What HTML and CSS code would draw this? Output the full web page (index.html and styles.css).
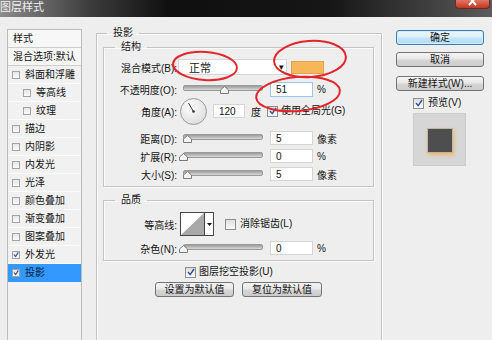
FILE: index.html
```html
<!DOCTYPE html>
<html lang="zh-CN">
<head>
  <meta charset="UTF-8">
  <meta name="viewport" content="width=device-width, initial-scale=1.0">
  <title>图层样式</title>
  <link rel="stylesheet" href="styles.css">
</head>
<body>
  <div class="window">
    <div class="titlebar">
      <span class="title">图层样式</span>
      <span class="close">
        <svg width="10" height="8" viewBox="0 0 10 8"><path d="M1 -3 L8 5 M8 -3 L1 5" stroke="#fff" stroke-width="2"/></svg>
      </span>
    </div>

    <div class="dialog">
      <ul class="styles-list">
        <li class="head">样式</li>
        <li class="head">混合选项:默认</li>
        <li><span class="cb"></span>斜面和浮雕</li>
        <li class="sub"><span class="cb"></span>等高线</li>
        <li class="sub"><span class="cb"></span>纹理</li>
        <li><span class="cb"></span>描边</li>
        <li><span class="cb"></span>内阴影</li>
        <li><span class="cb"></span>内发光</li>
        <li><span class="cb"></span>光泽</li>
        <li><span class="cb"></span>颜色叠加</li>
        <li><span class="cb"></span>渐变叠加</li>
        <li><span class="cb"></span>图案叠加</li>
        <li><span class="cb on"><svg width="7" height="7" viewBox="0 0 7 7"><path d="M1 3.5 L3 5.8 L6.2 1" fill="none" stroke="#2b4f9e" stroke-width="1.3"/></svg></span>外发光</li>
        <li class="active"><span class="cb on"><svg width="7" height="7" viewBox="0 0 7 7"><path d="M1 3.5 L3 5.8 L6.2 1" fill="none" stroke="#2b4f9e" stroke-width="1.3"/></svg></span>投影</li>
      </ul>

      <fieldset class="group outer">
        <legend>投影</legend>

        <fieldset class="group inner">
          <legend>结构</legend>
          <div class="row">
            <span class="lbl">混合模式(B):</span>
            <div class="select">正常<span class="arrow">▾</span></div>
            <span class="swatch"></span>
          </div>
          <div class="row gap6">
            <span class="lbl">不透明度(O):</span>
            <div class="slider"><span class="thumb" style="left: 37px"><svg width="9" height="8" viewBox="0 0 9 8"><path d="M0.5 7.5 V4 L4.5 0.5 L8.5 4 V7.5 Z" fill="#f3f3f3" stroke="#7b7b7b"/></svg></span></div>
            <input class="num focus" value="51">
            <span class="unit">%</span>
          </div>
          <div class="row angle">
            <span class="lbl">角度(A):</span>
            <svg class="dial" width="27" height="27" viewBox="0 0 27 27">
              <defs>
                <radialGradient id="dialg" cx="0.4" cy="0.35" r="0.7">
                  <stop offset="0" stop-color="#ffffff"/>
                  <stop offset="1" stop-color="#dcdcdc"/>
                </radialGradient>
              </defs>
              <circle cx="13.5" cy="13.5" r="13" fill="url(#dialg)" stroke="#9a9a9a"/>
              <path d="M13.5 13.5 L8.5 5" stroke="#333" stroke-width="1"/>
              <circle cx="13.5" cy="13.5" r="1.3" fill="#333"/>
            </svg>
            <input class="num short" value="120">
            <span class="unit deg">度</span>
            <span class="check"><span class="cb big on"><svg width="8" height="8" viewBox="0 0 8 8"><path d="M1 4 L3.2 6.6 L7 1" fill="none" stroke="#2b4f9e" stroke-width="1.4"/></svg></span>使用全局光(G)</span>
          </div>
          <div class="row gap5">
            <span class="lbl">距离(D):</span>
            <div class="slider"><span class="thumb" style="left: 0px"><svg width="9" height="8" viewBox="0 0 9 8"><path d="M0.5 7.5 V4 L4.5 0.5 L8.5 4 V7.5 Z" fill="#f3f3f3" stroke="#7b7b7b"/></svg></span></div>
            <input class="num" value="5">
            <span class="unit">像素</span>
          </div>
          <div class="row gap2">
            <span class="lbl">扩展(R):</span>
            <div class="slider"><span class="thumb" style="left: -4px"><svg width="9" height="8" viewBox="0 0 9 8"><path d="M0.5 7.5 V4 L4.5 0.5 L8.5 4 V7.5 Z" fill="#f3f3f3" stroke="#7b7b7b"/></svg></span></div>
            <input class="num" value="0">
            <span class="unit">%</span>
          </div>
          <div class="row gap2">
            <span class="lbl">大小(S):</span>
            <div class="slider"><span class="thumb" style="left: 0px"><svg width="9" height="8" viewBox="0 0 9 8"><path d="M0.5 7.5 V4 L4.5 0.5 L8.5 4 V7.5 Z" fill="#f3f3f3" stroke="#7b7b7b"/></svg></span></div>
            <input class="num" value="5">
            <span class="unit">像素</span>
          </div>
        </fieldset>

        <fieldset class="group inner quality">
          <legend>品质</legend>
          <div class="row contour-row">
            <span class="lbl">等高线:</span>
            <svg class="contour" width="34" height="24" viewBox="0 0 34 24">
              <rect x="0.5" y="0.5" width="33" height="23" fill="#fff" stroke="#444"/>
              <path d="M1 23 L24 1 L24 23 Z" fill="#a9a9a9"/>
              <path d="M24.5 0.5 V23.5" stroke="#444"/>
              <path d="M27 11 h5 l-2.5 3 z" fill="#111"/>
            </svg>
            <span class="check aa"><span class="cb big"></span>消除锯齿(L)</span>
          </div>
          <div class="row gap4">
            <span class="lbl">杂色(N):</span>
            <div class="slider"><span class="thumb" style="left: -4px"><svg width="9" height="8" viewBox="0 0 9 8"><path d="M0.5 7.5 V4 L4.5 0.5 L8.5 4 V7.5 Z" fill="#f3f3f3" stroke="#7b7b7b"/></svg></span></div>
            <input class="num" value="0">
            <span class="unit">%</span>
          </div>
        </fieldset>

        <div class="knockout">
          <span class="check"><span class="cb big on"><svg width="8" height="8" viewBox="0 0 8 8"><path d="M1 4 L3.2 6.6 L7 1" fill="none" stroke="#2b4f9e" stroke-width="1.4"/></svg></span>图层挖空投影(U)</span>
        </div>
        <div class="defaults">
          <button class="btn">设置为默认值</button>
          <button class="btn">复位为默认值</button>
        </div>
      </fieldset>

      <div class="actions">
        <button class="btn primary">确定</button>
        <button class="btn cancel">取消</button>
        <button class="btn newstyle">新建样式(W)...</button>
        <span class="check preview-cb"><span class="cb big on"><svg width="8" height="8" viewBox="0 0 8 8"><path d="M1 4 L3.2 6.6 L7 1" fill="none" stroke="#2b4f9e" stroke-width="1.4"/></svg></span>预览(V)</span>
        <div class="preview"><span class="preview-square"></span></div>
      </div>
    </div>

    <!-- hand-drawn red circles over the screenshot -->
    <svg class="marks" width="492" height="340" viewBox="0 0 492 340">
      <ellipse cx="205" cy="66" rx="32" ry="14" transform="rotate(4 205 66)" fill="none" stroke="#e3262a" stroke-width="2"/>
      <ellipse cx="310" cy="59" rx="36" ry="18" transform="rotate(-4 310 59)" fill="none" stroke="#e3262a" stroke-width="2"/>
      <ellipse cx="298" cy="94" rx="42" ry="17" transform="rotate(-5 298 94)" fill="none" stroke="#e3262a" stroke-width="2"/>
    </svg>
  </div>
</body>
</html>
```

FILE: styles.css
```css
* { box-sizing: border-box; }
body { margin: 0; width: 492px; height: 340px; overflow: hidden; background: #eeeeee; font-family: "Liberation Sans", "Noto Sans CJK SC", sans-serif; font-size: 10px; color: #141414; }
.window { position: relative; width: 492px; height: 340px; overflow: hidden; }

.titlebar { height: 17px; display: flex; justify-content: space-between; align-items: flex-start; background: linear-gradient(90deg, #8c8c8c 0, #3c3c3c 90px, #0f0f0f 170px, #161616 330px, #444 440px, #5c5c5c 100%); }
.title { margin-left: 0; line-height: 15px; font-size: 11px; color: #f0f0f0; }
.close { width: 35px; height: 9px; margin-right: 2px; display: flex; justify-content: center; background: linear-gradient(#e27562, #c03823); border: 1px solid #6e2a20; border-top: 0; border-radius: 0 0 4px 4px; }

.dialog { display: flex; align-items: flex-start; padding: 9px 0 0 7px; }

.styles-list { list-style: none; margin: 3px 14px 0 0; padding: 0; width: 75px; height: 330px; flex: none; background: #f1f1f1; border: 1px solid #bcbcbc; }
.styles-list li { height: 18px; display: flex; align-items: center; padding-left: 4px; border-bottom: 1px solid #fbfbfb; white-space: nowrap; line-height: 14px; }
.styles-list li.head { padding-left: 5px; background: #f7f7f7; border-bottom: 1px solid #cdcdcd; }
.styles-list li.sub { padding-left: 15px; }
.styles-list li.active { background: #3399ff; border-bottom-color: #3399ff; color: #0d1b3a; }

.cb { width: 8px; height: 8px; margin-right: 5px; flex: none; display: inline-flex; align-items: center; justify-content: center; background: linear-gradient(#e6e6e6, #fbfbfb); border: 1px solid #a4a4a4; }
.cb.big { width: 11px; height: 11px; margin-right: 3px; border-color: #8e8f8f; background: linear-gradient(#dedede, #fbfbfb); }
.check { display: inline-flex; align-items: center; white-space: nowrap; line-height: 12px; }

.group { margin: 0; min-width: 0; border: 1px solid #c4c4c4; box-shadow: inset 1px 1px 0 #fafafa, 1px 1px 0 #fafafa; }
.group legend { padding: 0 6px; line-height: 14px; }
.outer { width: 286px; height: 340px; flex: none; margin-right: 14px; padding: 0 7px 0 6px; }
.outer > legend { margin-left: 4px; }
.inner { width: 271px; padding: 5px 0 4px 0; }
.inner > legend { margin-left: 11px; }
.quality { margin-top: 6px; }

.row { display: flex; align-items: center; height: 16px; white-space: nowrap; }
.gap2 { margin-top: 2px; }
.gap4 { margin-top: 4px; }
.gap5 { margin-top: 5px; }
.gap6 { margin-top: 6px; }
.lbl { width: 73px; flex: none; text-align: right; }

.select { width: 109px; height: 16px; margin-left: 1px; padding-left: 10px; display: flex; align-items: center; justify-content: space-between; background: #fff; border: 1px solid #d6d6d6; font-size: 11px; }
.select .arrow { width: 9px; font-size: 9px; color: #111; text-align: center; }
.swatch { width: 33px; height: 13px; margin-left: 4px; background: #f7b65a; border: 1px solid #e4a24a; }

.slider { position: relative; width: 80px; height: 16px; margin-left: 6px; flex: none; }
.slider::before { content: ""; position: absolute; left: 0; right: 0; top: 4px; height: 4px; border-radius: 2px; background: linear-gradient(#9c9c9c, #d8d8d8); border: 1px solid #9a9a9a; }
.thumb { position: absolute; top: 5px; width: 9px; height: 8px; display: block; }
.thumb svg { display: block; }

.num { width: 43px; height: 14px; margin-left: 7px; padding: 0 0 0 5px; flex: none; font: 10px "Liberation Sans", sans-serif; color: #111; background: #fff; border: 1px solid #d5d5d5; outline: none; }
.num.focus { border-color: #9cc6e6; height: 15px; }
.num.short { width: 32px; margin-left: 6px; }
.unit { margin-left: 4px; }
.unit.deg { margin-left: 6px; }

.angle { height: 28px; }
.dial { margin-left: 3px; flex: none; display: block; }
.angle .check { margin-left: 6px; }

.contour-row { height: 24px; }
.contour { margin-left: 3px; flex: none; display: block; }
.check.aa { margin-left: 11px; }
.check.aa .cb { margin-right: 4px; }

.knockout { margin-top: 5px; height: 12px; padding-left: 82px; display: flex; align-items: center; }
.defaults { margin-top: 4px; padding-left: 52px; display: flex; gap: 8px; }

.btn { height: 15px; padding: 0; font: 10px "Liberation Sans", "Noto Sans CJK SC", sans-serif; line-height: 13px; color: #141414; background: linear-gradient(#f4f4f4 0, #e8e8e8 45%, #d6d6d6 55%, #cbcbcb 100%); border: 1px solid #747474; border-radius: 3px; }
.defaults .btn:first-child { width: 79px; }
.defaults .btn:last-child { width: 80px; }

.actions { width: 88px; margin-top: 4px; display: flex; flex-direction: column; flex: none; }
.actions .btn { width: 88px; }
.btn.primary { border-color: #3b7fb2; background: linear-gradient(#ecf7fd 0, #dcf0fb 45%, #c2e5f9 55%, #b2dcf5 100%); box-shadow: inset 0 0 0 1px #d0ecfb; }
.btn.cancel { margin-top: 7px; }
.btn.newstyle { margin-top: 9px; }
.preview-cb { margin: 6px 0 0 17px; }
.preview-cb .cb { margin-right: 4px; }
.preview { width: 53px; height: 53px; margin: 4px 0 0 17px; display: flex; align-items: center; justify-content: center; background: #d6d6d6; border: 1px solid #cbcbcb; }
.preview-square { width: 26px; height: 25px; margin: 1px 0 0 1px; background: #4e4e4e; border: 1px solid #bfb7a3; box-shadow: 1px 2px 3px rgba(246, 178, 76, 0.85); }

.marks { position: absolute; left: 0; top: 0; pointer-events: none; }
```
